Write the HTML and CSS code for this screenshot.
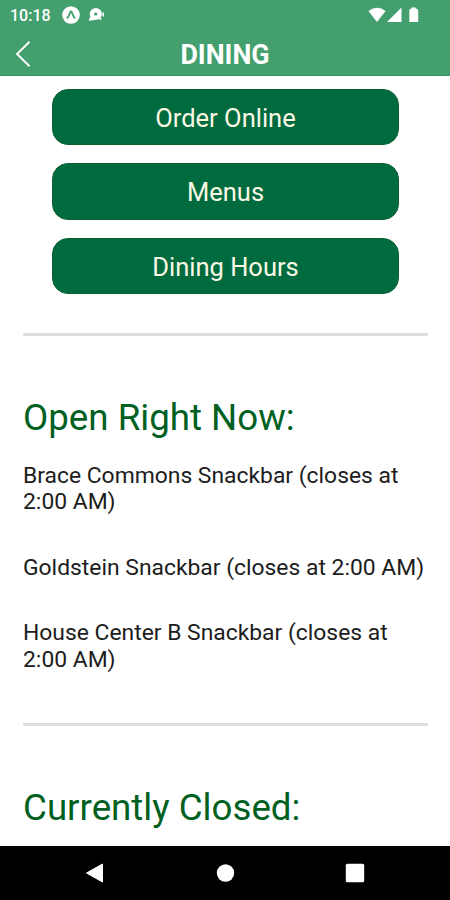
FILE: index.html
```html
<!DOCTYPE html>
<html lang="en">
  <head>
    <meta charset="UTF-8" />
    <meta name="viewport" content="width=device-width, initial-scale=1.0" />
    <title>Dining</title>
    <link rel="stylesheet" href="styles.css">
  </head>
  <body>
    <div class="screen">
      <header class="header">
        <div class="statusbar">
          <span class="time">10:18</span>
          <svg class="app-icon" width="18" height="18" viewBox="0 0 18 18">
            <circle cx="9" cy="9" r="8.8" fill="#fff" />
            <path d="M5 12.5 Q7.4 9 8.2 6.2 Q9 4.8 9.8 6.2 Q10.6 9 13 12.5" fill="none" stroke="#449f6e" stroke-width="1.8" />
          </svg>
          <svg class="chat-icon" width="17" height="16" viewBox="0 0 17 16">
            <circle cx="7.8" cy="7" r="6.1" fill="#fff" />
            <path d="M2.5 9.5 L0.5 13.5 H4 L7 12.5 Z" fill="#fff" />
            <circle cx="7.7" cy="7" r="1.6" fill="#449f6e" />
            <path d="M11 10.5 L13.2 12.6 M15.2 5.5 V9.5" stroke="#fff" stroke-width="1.5" />
          </svg>
          <svg class="signals" width="53" height="17" viewBox="0 0 53 17">
            <path d="M0.5 4 Q9 -2.6 17.6 4 L9 15 Z" fill="#fff" />
            <path d="M19 15 L33.5 0.5 V15 Z" fill="#fff" />
            <path d="M41.3 3.5 Q41.3 2 43.5 1.5 V0.5 H47.7 V1.5 Q50.2 2 50.2 3.5 V15 H41.3 Z" fill="#fff" />
          </svg>
        </div>
        <div class="navbar">
          <a class="back" href="#" aria-label="Back">
            <svg width="16" height="28" viewBox="0 0 16 28">
              <path d="M14.5 1.8 L2 14 L14.5 26.2" fill="none" stroke="#fff" stroke-width="1.9" />
            </svg>
          </a>
          <h1 class="title">DINING</h1>
        </div>
      </header>

      <main class="content">
        <div class="buttons">
          <a class="btn" href="#">Order Online</a>
          <a class="btn" href="#">Menus</a>
          <a class="btn" href="#">Dining Hours</a>
        </div>

        <section class="section">
          <h2>Open Right Now:</h2>
          <p>Brace Commons Snackbar (closes at 2:00 AM)</p>
          <p>Goldstein Snackbar (closes at 2:00 AM)</p>
          <p>House Center B Snackbar (closes at 2:00 AM)</p>
        </section>

        <section class="section closed">
          <h2>Currently Closed:</h2>
        </section>
      </main>

      <nav class="android-nav">
        <svg width="20" height="20" viewBox="0 0 20 20">
          <path d="M17.5 1 V19 L1.5 10 Z" fill="#fff" stroke="#fff" stroke-linejoin="round" />
        </svg>
        <svg width="20" height="20" viewBox="0 0 20 20">
          <circle cx="10.5" cy="10" r="8.7" fill="#fff" />
        </svg>
        <svg width="20" height="20" viewBox="0 0 20 20">
          <rect x="0.8" y="0.8" width="18.4" height="18.4" rx="1.5" fill="#fff" />
        </svg>
      </nav>
    </div>
  </body>
</html>
```
FILE: styles.css
```css
* {
  box-sizing: border-box;
}
body {
  margin: 0;
  font-family: Roboto, sans-serif;
  background: #fff;
}
a {
  color: inherit;
  text-decoration: none;
}
svg {
  display: block;
}
.screen {
  display: grid;
  grid-template-rows: 76px 770px 54px;
  height: 900px;
}

/* header */
.header {
  background: #449f6e;
  border-bottom: 1px solid #2b965f;
  color: #fff;
}
.statusbar {
  display: flex;
  align-items: center;
  height: 30px;
  padding: 0 29px 0 10px;
}
.time {
  width: 52px;
  font-size: 16px;
  font-weight: 500;
}
.chat-icon {
  margin-left: 8px;
}
.signals {
  margin-left: auto;
}
.navbar {
  display: grid;
  grid-template-columns: 40px 1fr 40px;
  align-items: center;
  height: 46px;
}
.back {
  padding-left: 15px;
}
.title {
  margin: 0;
  padding-top: 2px;
  font-size: 26.8px;
  line-height: 46px;
  font-weight: 700;
  text-align: center;
}

/* page */
.content {
  padding: 12.5px 22px 0 23px;
  overflow: hidden;
}
.buttons {
  display: flex;
  flex-direction: column;
  gap: 18px;
  padding: 0 29px;
}
.btn {
  height: 56.6px;
  border: 1px solid #0b6130;
  border-radius: 16px;
  background: #006b3f;
  color: #fbf9e6;
  font-size: 25.5px;
  line-height: 57.6px;
  text-align: center;
}
.section {
  margin-top: 38.5px;
  padding-top: 60px;
  border-top: 3px solid #dedede;
}
.section.closed {
  margin-top: 50px;
}
.section h2 {
  margin: 0 0 24px;
  color: #00601f;
  font-size: 36.7px;
  line-height: 43px;
  font-weight: 400;
}
.section p {
  margin: 0 0 39px;
  color: #1c1c1c;
  font-size: 22.87px;
  line-height: 26.5px;
  font-weight: 400;
}

/* system buttons */
.android-nav {
  display: flex;
  justify-content: space-between;
  align-items: center;
  padding: 0 85px;
  background: #000;
}
```
